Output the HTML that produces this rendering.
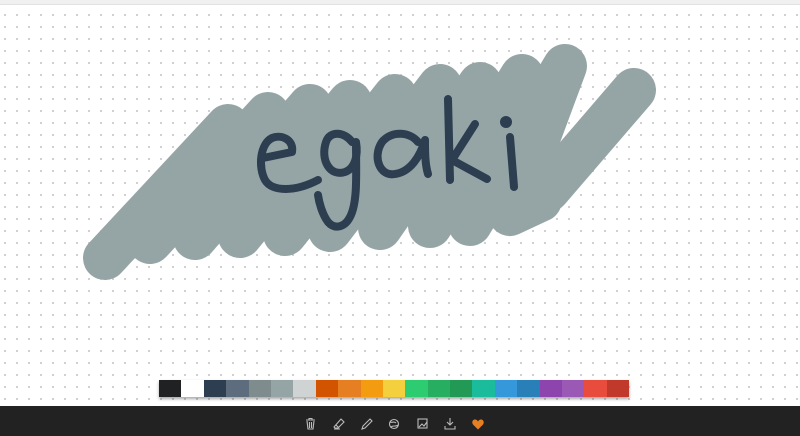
<!DOCTYPE html>
<html><head><meta charset="utf-8"><style>
html,body{margin:0;padding:0;width:800px;height:436px;overflow:hidden;background:#fff;font-family:"Liberation Sans",sans-serif}
.top{position:absolute;left:0;top:0;width:800px;height:4px;background:#f0f0f0;border-bottom:1px solid #e2e2e2}
.canvas{position:absolute;left:0;top:5px;width:800px;height:401px;
background-image:radial-gradient(circle,#c4c4c4 0.8px,transparent 1.1px);background-size:12px 12px;background-position:-1px 4px}
.pal{position:absolute;left:159px;top:380px;height:17px;display:flex;box-shadow:0 2px 3px rgba(0,0,0,.35)}
.pal div{width:22.4px;height:17px}
.bar{position:absolute;left:0;top:406px;width:800px;height:30px;background:#222}
</style></head><body>
<div class="top"></div>
<div class="canvas"></div>
<svg width="800" height="406" style="position:absolute;left:0;top:0">
<g fill="none" stroke="#95a5a6" stroke-width="44" stroke-linecap="round" stroke-linejoin="round">
<path d="M105,258 L228,126 L150,242 L268,114 L195,238 L310,106 L240,236 L350,102 L285,234 L395,96 L330,230 L440,86 L380,228 L480,84 L430,226 L522,76 L470,224 L565,66 L510,214 L540,200"/>
<path d="M634,90 L548,190"/>
</g>
<g fill="none" stroke="#2c3e50" stroke-width="8" stroke-linecap="round" stroke-linejoin="round">
<path d="M263,158 L292,152 C294,140 282,134 272,138 C260,144 258,167 265,180 C272,192 295,192 318,180"/>
<path d="M352,142 C345,132 330,130 326,142 C320,160 330,177 345,172 C356,168 358,154 356,142 M356,142 C356,172 358,202 350,217 C345,227 335,230 328,222 C322,214 319,202 318,195"/>
<path d="M418,142 C410,132 392,130 382,142 C372,157 380,177 395,174 C410,172 420,157 425,140 C425,152 425,164 428,174"/>
<path d="M448,99 L450,180 M475,124 L452,160 L487,179"/>
<path d="M510,137 L514,187"/>
</g>
<circle cx="506" cy="122" r="6" fill="#2c3e50"/>
</svg>
<div class="pal">
<div style="background:#1f2122"></div><div style="background:#fff"></div><div style="background:#2c3e50"></div><div style="background:#5d6d7e"></div><div style="background:#7f8c8d"></div><div style="background:#95a5a6"></div><div style="background:#d0d3d4"></div><div style="background:#d35400"></div><div style="background:#e67e22"></div><div style="background:#f39c12"></div><div style="background:#f4d03f"></div><div style="background:#2ecc71"></div><div style="background:#27ae60"></div><div style="background:#229954"></div><div style="background:#1abc9c"></div><div style="background:#3498db"></div><div style="background:#2980b9"></div><div style="background:#8e44ad"></div><div style="background:#9b59b6"></div><div style="background:#e74c3c"></div><div style="background:#c0392b"></div>
</div>
<div class="bar"></div>
<svg width="800" height="436" style="position:absolute;left:0;top:0" fill="none" stroke="#bbb" stroke-width="1.1">
<path d="M306,420 h9 M309,420 v-1.5 h3 v1.5 M307,421 l1,8 h5 l1,-8 M309.5,422 v6 M311.5,422 v6"/>
<path d="M334,427 l7,-8 l3,3 l-6,6 h-3 z M336,425 l3,3 M334,429 h6"/>
<path d="M362,429 l1,-3 l7,-7 l2,2 l-7,7 z"/>
<circle cx="394" cy="424" r="4.5"/><path d="M390,422 c2,1 4,-1 6,1 M391,427 c2,-2 5,0 7,-2"/>
<rect x="418" y="419" width="9" height="9"/><path d="M419,427 l3,-3 l2,2 l3,-4"/>
<path d="M450,418 v7 M447,422 l3,3 l3,-3 M445,426 v3 h10 v-3"/>
</svg>
<svg width="12" height="11" viewBox="0 0 12 11" style="position:absolute;left:472px;top:419px"><path d="M6,10.5 L1,5.5 C-0.5,3.5 0.5,0.5 3,0.5 C4.5,0.5 5.5,1.5 6,2.5 C6.5,1.5 7.5,0.5 9,0.5 C11.5,0.5 12.5,3.5 11,5.5 Z" fill="#e67e22"/></svg>
</body></html>
